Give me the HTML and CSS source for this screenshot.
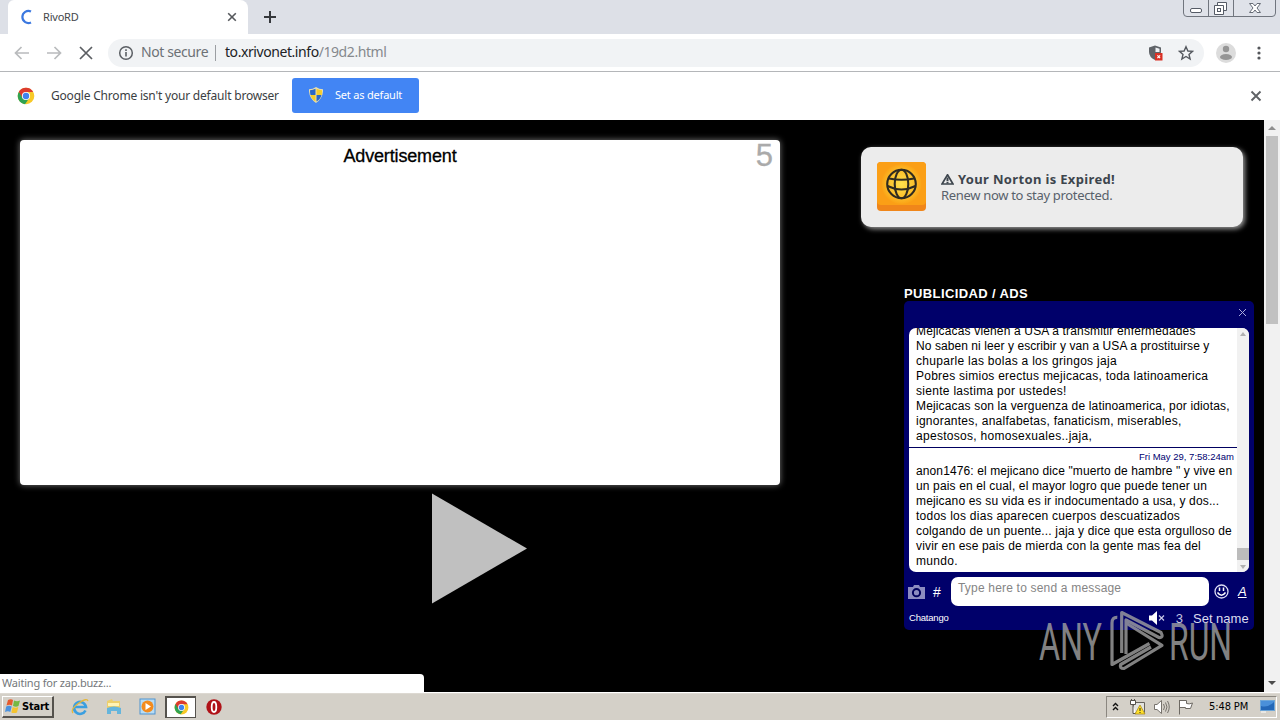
FILE: index.html
```html
<!DOCTYPE html>
<html lang="en">
<head>
<meta charset="utf-8">
<title>RivoRD</title>
<link rel="stylesheet" href="styles.css">
</head>
<body>
<svg class="defs" width="0" height="0">
  <symbol id="chrome" viewBox="0 0 18 18">
    <circle cx="9" cy="9" r="8.3" fill="#f8c927"/>
    <path d="M9 9L1.8 4.9A8.3 8.3 0 0 0 8 17.2L12.5 10.8Z" fill="#2fa352"/>
    <path d="M9 9L5.6 11L1.8 4.8A8.3 8.3 0 0 1 16.2 5H9Z" fill="#dc3b2f"/>
    <circle cx="9" cy="9" r="4.1" fill="#fff"/>
    <circle cx="9" cy="9" r="3.2" fill="#3f83ee"/>
  </symbol>
</svg>
<div class="screen">
  <header class="tabstrip">
    <div class="tab">
      <svg class="spinner" width="14" height="16" viewBox="0 0 14 16"><path d="M11 2.6A6 6 0 1 0 11 13.4" fill="none" stroke="#3b78e0" stroke-width="2.200"/></svg>
      <span class="tab-title">RivoRD</span>
      <svg class="tab-close" width="10" height="10" viewBox="0 0 10 10"><path d="M1.2 1.2L8.8 8.8M8.8 1.2L1.2 8.8" stroke="#55585c" stroke-width="1.6"/></svg>
    </div>
    <svg class="newtab" width="12" height="12" viewBox="0 0 12 12"><path d="M6 0V12M0 6H12" stroke="#35383c" stroke-width="2"/></svg>
    <svg class="winbtns" width="94" height="18" viewBox="0 0 94 18">
      <path d="M.5 0V13Q.5 16.500 4 16.500H89Q92.500 16.500 92.500 13V0M25.500 0V16M50.500 0V16" fill="#dfe2e9" stroke="#70757e"/>
      <rect x="7.500" y="8.500" width="11" height="4" rx="1.500" fill="#fff" stroke="#555b66"/>
      <path d="M34.500 2.500H43.500V10.500H34.500Z" fill="#fff" stroke="#555b66"/>
      <path d="M31.500 5.500H40.500V14.500H31.500Z" fill="#fff" stroke="#555b66"/>
      <rect x="34.500" y="8.500" width="3" height="3" fill="#fff" stroke="#555b66"/>
      <path d="M66.500 3.500H70L72 6L74 3.500H77.500L74 8L77.500 12.500H74L72 10L70 12.500H66.500L70 8Z" fill="#fff" stroke="#666c76"/>
    </svg>
  </header>

  <div class="toolbar">
    <svg class="nav" width="90" height="20" viewBox="0 0 90 20" fill="none" stroke="#b9bbbd" stroke-width="1.700">
      <path d="M16 10H3M8.500 4L2.500 10L8.500 16M34 10H47M41.500 4L47.500 10L41.500 16"/>
      <path d="M67 4L79 16M79 4L67 16" stroke="#5b5e62" stroke-width="1.700"/>
    </svg>
    <div class="omnibox">
      <svg width="16" height="16" viewBox="0 0 16 16"><circle cx="8" cy="8" r="6.300" fill="none" stroke="#5b5f64" stroke-width="1.500"/><path d="M8 7V11.500M8 4.200V5.900" stroke="#5b5f64" stroke-width="1.600"/></svg>
      <span class="insecure">Not secure</span>
      <span class="divider"></span>
      <span class="url"><b>to.xrivonet.info</b>/19d2.html</span>
      <svg class="shield" width="16" height="16" viewBox="0 0 16 16"><path d="M7 .5L13 2.500V7Q13 12 7 15Q1 12 1 7V2.500Z" fill="#5f6368"/><path d="M7.500 2.500L11.500 3.700V7H7.500Z" fill="#eff1f4"/><rect x="7" y="8" width="7.500" height="7.500" fill="#d93025"/><path d="M9.400 10.400L12.100 13.100M12.100 10.400L9.400 13.100" stroke="#fff" stroke-width="1.200"/></svg>
      <svg class="star" width="16" height="16" viewBox="0 0 16 16"><path d="M8 1.700L9.900 6L14.500 6.300L11 9.400L12.100 14L8 11.500L3.900 14L5 9.400L1.500 6.300L6.100 6Z" fill="none" stroke="#54585e" stroke-width="1.400"/></svg>
    </div>
    <svg class="avatar" width="20" height="20" viewBox="0 0 20 20"><circle cx="10" cy="10" r="10" fill="#dcdcdc"/><circle cx="10" cy="6" r="3.200" fill="#959595"/><ellipse cx="10" cy="14" rx="6" ry="3" fill="#959595"/></svg>
    <svg class="menu" width="4" height="16" viewBox="0 0 4 16" fill="#54575b"><circle cx="2" cy="3" r="1.600"/><circle cx="2" cy="8" r="1.600"/><circle cx="2" cy="13" r="1.600"/></svg>
  </div>

  <div class="infobar">
    <svg width="18" height="18"><use href="#chrome"/></svg>
    <span class="info-text">Google Chrome isn't your default browser</span>
    <div class="default-btn">
      <svg width="14" height="16" viewBox="0 0 14 16"><path d="M7 0Q10 2.200 14 2.200Q14.500 11 7 16Q-.5 11 0 2.200Q4 2.200 7 0Z" fill="#e8dfae"/><path d="M6.500 1.700V8H1.500Q1 6 1 3.200Q4 3 6.500 1.700ZM7.500 8H12.500Q11.500 12 7.500 14.500Z" fill="#2a67c8"/><path d="M7.500 1.700V8H12.700Q13 6 13 3.200Q10 3 7.500 1.700ZM6.500 8H1.500Q2.500 12 6.500 14.500Z" fill="#f5cd2c"/></svg>
      <span>Set as default</span>
    </div>
    <svg class="info-close" width="12" height="12" viewBox="0 0 12 12"><path d="M1.500 1.500L10.500 10.500M10.500 1.500L1.500 10.500" stroke="#5f6266" stroke-width="1.900"/></svg>
  </div>

  <div class="viewport">
    <main class="page">
      <section class="player">
        <div class="ad"><span class="ad-title">Advertisement</span><span class="count">5</span></div>
        <svg class="play" width="96" height="112" viewBox="0 0 96 112"><path d="M0 .5L95 55.500L0 110.500Z" fill="#c0c0c0"/></svg>
      </section>

      <aside class="side">
        <h2>PUBLICIDAD / ADS</h2>
        <div class="chat">
          <div class="chat-head"><svg width="9" height="9" viewBox="0 0 9 9"><path d="M1 1L8 8M8 1L1 8" stroke="#a9a9dc"/></svg></div>
          <div class="chat-body">
            <div class="log">
              <div class="msg first">
                <p class="l1">Mejicacas vienen a USA a transmitir enfermedades</p>
                <p class="l2">No saben ni leer y escribir y van a USA a prostituirse y</p>
                <p class="l3">chuparle las bolas a los gringos jaja</p>
                <p class="l4">Pobres simios erectus mejicacas, toda latinoamerica</p>
                <p class="l5">siente lastima por ustedes!</p>
                <p class="l6">Mejicacas son la verguenza de latinoamerica, por idiotas,</p>
                <p class="l7">ignorantes, analfabetas, fanaticism, miserables,</p>
                <p class="l8">apestosos, homosexuales..jaja,</p>
              </div>
              <div class="msg second">
                <time>Fri May 29, 7:58:24am</time>
                <p class="m1">anon1476: el mejicano dice "muerto de hambre " y vive en</p>
                <p class="m2">un pais en el cual, el mayor logro que puede tener un</p>
                <p class="m3">mejicano es su vida es ir indocumentado a usa, y dos...</p>
                <p class="m4">todos los dias aparecen cuerpos descuatizados</p>
                <p class="m5">colgando de un puente... jaja y dice que esta orgulloso de</p>
                <p class="m6">vivir en ese pais de mierda con la gente mas fea del</p>
                <p class="m7">mundo.</p>
              </div>
            </div>
            <div class="chat-scroll"><i class="up"></i><i class="grip"></i><i class="down"></i></div>
          </div>
          <div class="compose">
            <svg width="17" height="14" viewBox="0 0 17 14"><path d="M0 2H5L6 0H11L12 2H17V14H0Z" fill="#8c8cc0"/><circle cx="8.500" cy="7.700" r="3.600" fill="#8c8cc0" stroke="#00005c" stroke-width="2"/></svg>
            <span class="hash">#</span>
            <div class="field">Type here to send a message</div>
            <svg class="smile" width="15" height="15" viewBox="0 0 15 15"><circle cx="7.500" cy="7.500" r="6.500" fill="none" stroke="#dcdcf4" stroke-width="1.300"/><path d="M5.500 3.500V7M9.500 3.500V7" stroke="#fff" stroke-width="1.500"/><path d="M3.500 8.500Q7.500 14 11.500 8.500" fill="none" stroke="#fff" stroke-width="1.400"/></svg>
            <span class="style-a">A</span>
          </div>
          <div class="chat-foot">
            <span class="brand">Chatango</span>
            <svg class="mute" width="16" height="14" viewBox="0 0 16 14"><path d="M0 4.500H3L8 0V14L3 9.500H0Z" fill="#fff"/><path d="M10 4.500L15 9.500M15 4.500L10 9.500" stroke="#c9c9e8" stroke-width="1.200"/></svg>
            <span class="num">3</span><span class="setname">Set name</span>
          </div>
        </div>
      </aside>
    </main>
    <div class="scrollbar"><i class="up"></i><i class="grip"></i><i class="down"></i></div>

    <div class="toast">
      <svg class="globe" width="49" height="49" viewBox="0 0 49 49">
        <defs><radialGradient id="glow"><stop offset="0" stop-color="#ffe14d"/><stop offset=".65" stop-color="#fcc02c"/><stop offset="1" stop-color="#fba316"/></radialGradient></defs>
        <rect x="0" y="0" width="49" height="49" rx="4" fill="#f0861a"/><rect width="49" height="43" rx="4" fill="#fb9f16"/>
        <circle cx="24.500" cy="22" r="20" fill="url(#glow)"/>
        <g fill="none" stroke="#302b20" stroke-width="2.100"><circle cx="24.500" cy="22" r="14.300"/><ellipse cx="24.500" cy="22" rx="6.800" ry="14.300"/><path d="M12 16.500Q24.500 19 37 16.500M10.500 24Q24.500 31 38.500 24"/></g>
      </svg>
      <div class="toast-text"><strong><svg width="13" height="11" viewBox="0 0 13 11"><path d="M6.500 .8L12 10H1Z" fill="none" stroke="#3d454d" stroke-width="1.700"/><path d="M6.500 3.500V7.300M6.500 8V9.500" stroke="#3d454d" stroke-width="2"/></svg><span>Your Norton is Expired!</span></strong><span class="renew">Renew now to stay protected.</span></div>
    </div>
    <div class="status">Waiting for zap.buzz...</div>
    <svg class="watermark" width="196" height="66" viewBox="0 0 196 66">
      <g class="wm-text"><text x="1" y="52.500" textLength="63" lengthAdjust="spacingAndGlyphs">ANY</text><text x="131" y="52.500" textLength="63" lengthAdjust="spacingAndGlyphs">RUN</text></g>
      <g fill="none" stroke="#a2a2a2" stroke-width="3.200" stroke-linejoin="round">
        <path d="M79.300 10.300Q74 10 74 16V57.500L111.500 36.500"/>
        <path d="M83.700 46V5.500L123 25.500Q126 31 121 30.500L88 13V47"/>
        <path d="M88 16L124 38.300L86 61.500Q81 61.500 82.700 57.500L113 40"/>
      </g>
    </svg>
  </div>

  <footer class="taskbar">
    <div class="start">
      <svg width="16" height="16" viewBox="0 0 16 16"><path d="M3 2Q6 .5 8 2L7 7.500Q4.500 6 1.500 7.500Z" fill="#e65b2e"/><path d="M9 2.500Q12 4 15 2.500L13.500 8Q11 9.300 8 8Z" fill="#75b843"/><path d="M1.200 8.500Q4 7 6.700 8.500L5.300 14Q3 12.500 0 14Z" fill="#4b92df"/><path d="M7.700 9Q10.500 10.300 13.300 9L12 14.500Q9 15.700 6.300 14.500Z" fill="#f4c32f"/></svg>
      <span>Start</span>
    </div>
    <div class="quick">
      <svg width="18" height="18" viewBox="0 0 18 18"><path d="M14.500 12.500A6 6 0 1 1 15 9H4" fill="none" stroke="#3b9fe0" stroke-width="2.600"/><path d="M2 15Q-1 11 8 5Q16 -.5 17 3" fill="none" stroke="#e6b83b" stroke-width="1.300"/></svg>
      <svg width="18" height="18" viewBox="0 0 18 18"><path d="M2 3L7 1L8 3H15V13H2Z" fill="#edcf6c"/><path d="M3 5H14V8H3Z" fill="#fff3b5"/><path d="M2 10Q9 7 16 10V16H12V13H6V16H2Z" fill="#65b5dc"/></svg>
      <svg width="18" height="18" viewBox="0 0 18 18"><rect x="1" y="1" width="15" height="15" fill="#b8dcf4" stroke="#4f93cf"/><circle cx="8.500" cy="8.500" r="6" fill="#f38b1d"/><path d="M6.500 5L12 8.500L6.500 12Z" fill="#fff"/></svg>
      <div class="active"><svg width="15" height="15"><use href="#chrome"/></svg></div>
      <svg width="18" height="18" viewBox="0 0 18 18"><circle cx="9" cy="9" r="7.700" fill="#b01218"/><ellipse cx="9" cy="9" rx="2.300" ry="5" fill="#b01218" stroke="#fff" stroke-width="1.800"/></svg>
    </div>
    <div class="tray">
      <svg width="7" height="9" viewBox="0 0 7 9" fill="none" stroke="#111" stroke-width="1.400"><path d="M1 4L3.500 1.500L6 4M1 8L3.500 5.500L6 8"/></svg>
      <svg class="net" width="17" height="16" viewBox="0 0 17 16"><path d="M4.500 3.500H15.500V13.500H4.500Z" fill="#e3e3df" stroke="#66625c"/><path d="M1.500 1.500H6.500V5.500H1.500ZM4 6V14.500H7M2.500 0V2M5.500 0V2" fill="#fff" stroke="#55514b"/><path d="M11 6L16 15H6Z" fill="#ffe02a" stroke="#a38310" stroke-width=".7"/><path d="M11 9V12M11 13V14" stroke="#222"/></svg>
      <svg class="vol" width="17" height="16" viewBox="0 0 17 16" fill="none" stroke="#77736d"><path d="M1.500 5.500H4L8.500 1.500V14.500L4 10.500H1.500Z" fill="#fff"/><path d="M10.500 5Q12.500 8 10.500 11M12.500 3.500Q15.500 8 12.500 12.500M14.500 2Q18 8 14.500 14"/></svg>
      <svg class="flag" width="17" height="16" viewBox="0 0 17 16"><path d="M2.500 1V15.500M2.500 1.500H9.500V4.500Q12 5.500 15.500 4L13.500 9.500H8.500V8.500H2.500" fill="#fff" stroke="#6d6963"/></svg>
      <span class="clock">5:48 PM</span>
      <svg class="mon" width="15" height="13" viewBox="0 0 15 13"><rect x=".5" y=".5" width="14" height="10" fill="#2468b8" stroke="#6fa7d8"/><path d="M1 6Q8 8 14 2V1H1Z" fill="#4a90d9"/><path d="M1 12H6" stroke="#fff"/></svg>
    </div>
  </footer>
</div>
</body>
</html>
```
FILE: styles.css
```css
* { box-sizing: border-box; }
body { margin: 0; font-family: "Liberation Sans", sans-serif; }
p, h2 { margin: 0; }
svg { display: block; flex: none; }
i { display: block; }
.defs { position: absolute; }
.screen { width: 1280px; height: 720px; display: flex; flex-direction: column; overflow: hidden; background: #fff; white-space: nowrap; }

.tabstrip { height: 34px; flex: none; display: flex; align-items: flex-start; background: #dde0e7; padding-left: 8px; }
.tab { width: 240px; height: 34px; display: flex; align-items: center; background: #fff; border-radius: 6px 8px 0 0; padding: 0 11px 0 12px; font: 11px "Noto Sans", sans-serif; color: #45484c; }
.tab-title { margin: -2px 0 0 9px; letter-spacing: -.2px; }
.tab-close { margin-left: auto; }
.newtab { margin: 11px 0 0 16px; }
.winbtns { margin-left: auto; margin-right: 3px; }

.toolbar { height: 38px; flex: none; display: flex; align-items: center; border-bottom: 1px solid #b4b6b9; padding-left: 13px; }
.omnibox { margin-left: 5px; width: 1096px; height: 28px; border-radius: 14px; background: #f1f3f5; display: flex; align-items: center; padding: 0 10px; font: 14px "Noto Sans", sans-serif; color: #6d7176; }
.insecure { margin: -2px 0 0 7px; width: 67px; letter-spacing: -.4px; }
.divider { width: 1px; height: 16px; margin: 0 9px 0 7px; background: #9b9ea2; }
.url { margin-top: -2px; letter-spacing: -.43px; color: #85898d; }
.url b { font-weight: 400; color: #202124; }
.shield { margin-left: auto; }
.star { margin-left: 14px; }
.avatar { margin-left: 12px; }
.menu { margin-left: 21px; }

.infobar { height: 48px; flex: none; display: flex; align-items: center; padding: 0 18px 1px 17px; font: 12px "Noto Sans", sans-serif; color: #3b3e42; }
.info-text { margin-left: 16px; width: 228px; letter-spacing: -.2px; }
.default-btn { margin: -1px 0 0 13px; width: 127px; height: 35px; border-radius: 3px; background: #4285f4; display: flex; align-items: center; gap: 12px; padding-left: 17px; color: #fff; font-size: 11px; letter-spacing: -.2px; }
.default-btn span { margin-top: -2px; }
.info-close { margin-left: auto; }

.viewport { position: relative; height: 572px; flex: none; display: flex; background: #000; }
.page { width: 1264px; display: flex; }
.player { width: 760px; margin: 20px 0 0 20px; }
.ad { height: 345px; background: #fff; border-radius: 4px; box-shadow: 0 0 6px #777; display: grid; grid-template-columns: 1fr auto 1fr; align-items: start; }
.ad-title { grid-column: 2; margin-top: 6px; font-size: 18px; line-height: 20px; letter-spacing: -.15px; -webkit-text-stroke: .3px #000; }
.count { justify-self: end; margin-right: 7px; font-size: 31px; line-height: 31px; color: #aaa; -webkit-text-stroke: .3px #aaa; }
.play { margin: 8px 0 0 412px; }

.side { margin: 165px 0 0 124px; width: 350px; }
.side h2 { height: 16px; font-size: 13px; line-height: 18px; letter-spacing: .38px; color: #fff; }
.chat { height: 329px; background: #00006a; border-radius: 5px; padding: 0 5px; }
.chat-head { height: 27px; display: flex; justify-content: flex-end; padding: 7px 2px 0 0; }
.chat-body { height: 244px; background: #fff; border-radius: 7px; overflow: hidden; display: flex; }
.log { width: 328px; display: flex; flex-direction: column; justify-content: flex-end; font-size: 12px; line-height: 15px; color: #000; }
.msg { flex: none; padding-left: 7px; }
.first { border-bottom: 1px solid #000060; padding-bottom: 3px; }
.second { padding-bottom: 3px; }
.msg time { display: block; height: 16px; padding: 2px 3px 0 0; text-align: right; font-size: 9.500px; line-height: 13px; color: #000070; }
.l1, .l6, .m3, .m5, .m6 { letter-spacing: .155px; }
.l2 { letter-spacing: .07px; }
.l3, .l5, .l8, .m7 { letter-spacing: .29px; }
.l4, .l7, .m4 { letter-spacing: .25px; }
.m1 { letter-spacing: .11px; }
.m2 { letter-spacing: .14px; }
.chat-scroll { width: 12px; background: #f1f1f1; display: flex; flex-direction: column; align-items: center; }
.chat-scroll .up, .chat-scroll .down { border: 3px solid transparent; border-top: 0; border-bottom: 4px solid #b0b0b0; margin-top: 4px; }
.chat-scroll .grip { width: 12px; height: 12px; background: #bcbcbc; margin-top: auto; }
.chat-scroll .down { border-bottom: 0; border-top: 4px solid #b0b0b0; margin: 5px 0 3px; }
.compose { display: flex; align-items: center; height: 29px; margin-top: 5px; color: #fff; }
.compose > svg:first-child { margin-left: -1px; }
.hash { width: 18px; margin-left: 8px; font-size: 14px; }
.field { width: 258px; height: 29px; border-radius: 7px; background: #fff; color: #858585; font-size: 12px; line-height: 23px; padding-left: 7px; letter-spacing: .19px; }
.smile { margin-left: 5px; }
.style-a { margin-left: 9px; font: italic 13px "Liberation Sans", sans-serif; text-decoration: underline; }
.chat-foot { display: flex; align-items: center; height: 24px; color: #fff; }
.brand { margin-top: -1px; font-size: 9.500px; letter-spacing: -.2px; }
.mute { margin-left: auto; }
.num { font-size: 13px; margin-left: 11px; color: #c6c6e0; }
.setname { font-size: 13px; margin-left: 10px; width: 56px; color: #dcdcef; }

.scrollbar { width: 16px; background: #f1f1f1; display: flex; flex-direction: column; align-items: center; }
.scrollbar .up { border: 4px solid transparent; border-top: 0; border-bottom: 4px solid #8f8f8f; margin: 6px 0 6px; }
.scrollbar .grip { width: 12px; height: 188px; background: #c1c1c1; }
.scrollbar .down { border: 4px solid transparent; border-bottom: 0; border-top: 4px solid #4c4c4c; margin: auto 0 7px; }

.toast { position: absolute; left: 861px; top: 27px; width: 382px; height: 80px; border-radius: 10px; background: #ececec; box-shadow: 2px 2px 5px #999; display: flex; align-items: center; padding: 0 16px; font-family: "Noto Sans", sans-serif; color: #3d454d; }
.globe { margin-top: -2px; }
.toast-text { margin-left: 15px; font-size: 13px; line-height: 16px; }
.toast-text strong { display: flex; align-items: center; gap: 4px; letter-spacing: .34px; }
.renew { display: block; color: #58616b; letter-spacing: -.32px; }
.status { position: absolute; left: 0; top: 554px; width: 424px; height: 18px; background: #fff; border-radius: 0 4px 0 0; padding-left: 2px; font: 11px/18px "Noto Sans", sans-serif; letter-spacing: -.2px; color: #74777a; }
.watermark { position: absolute; left: 1038px; top: 487px; opacity: .8; }
.wm-text { font: 400 52px Roboto, sans-serif; fill: #a2a2a2; }

.taskbar { height: 28px; flex: none; background: #d4d0c8; border-top: 1px solid #fff; display: flex; align-items: center; padding: 0 3px 0 2px; box-shadow: inset 0 1px #ddd9d2; }
.start { width: 52px; height: 22px; display: flex; align-items: center; gap: 1px; padding-left: 2px; border: 1px solid #fff; border-right: 2px solid #55524d; border-bottom: 2px solid #55524d; font: bold 11px "DejaVu Sans Condensed", sans-serif; }
.start span { letter-spacing: -.2px; }
.quick { display: flex; align-items: center; margin-left: 17px; gap: 16px; }
.quick .active { width: 31px; height: 22px; display: flex; align-items: center; justify-content: center; background: #fff; border: 1px solid #55524d; border-width: 2px 1px 1px 2px; margin: 0 -7px 0 -8px; }
.tray { margin-left: auto; width: 171px; height: 22px; border: 1px solid #8b8780; border-right-color: #fff; border-bottom-color: #fff; display: flex; align-items: center; padding-left: 5px; font: 11px "DejaVu Sans Condensed", sans-serif; }
.net { margin-left: 10px; }
.vol { margin-left: 7px; }
.flag { margin-left: 7px; }
.clock { width: 42px; margin-left: 15px; letter-spacing: -.1px; }
.mon { margin-left: 9px; }
```
